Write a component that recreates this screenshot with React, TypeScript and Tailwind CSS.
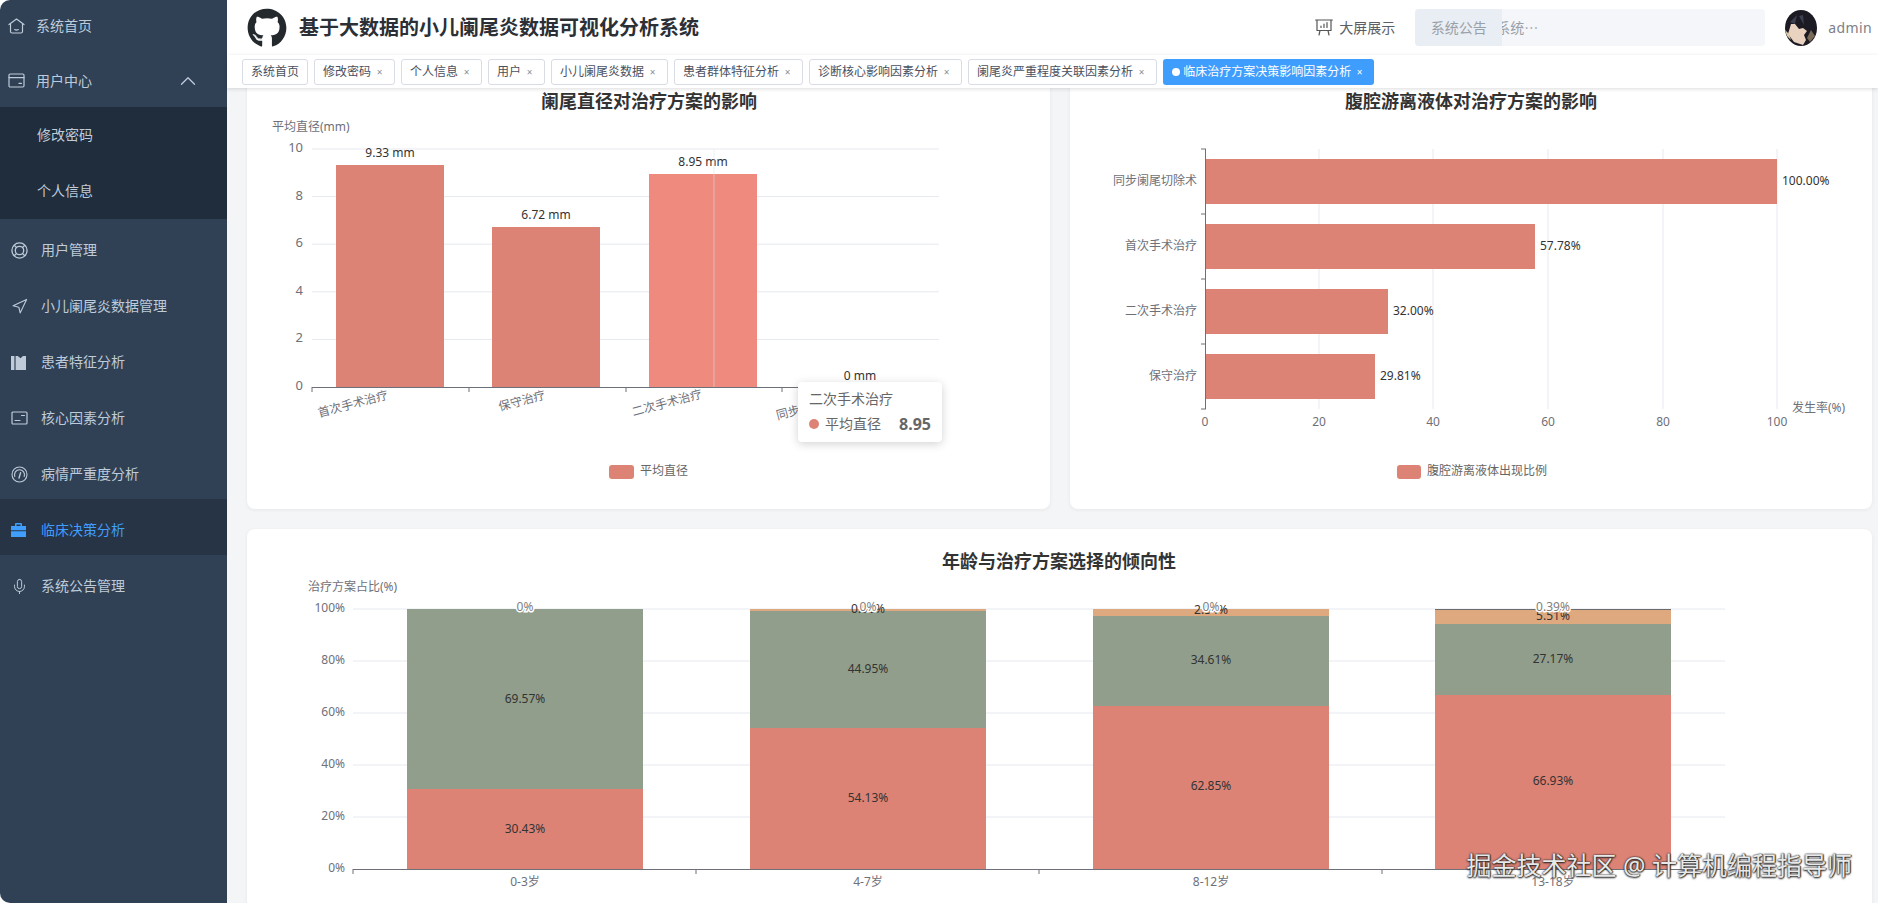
import { ChevronDown, ChevronUp, Mic, Navigation } from "lucide-react";
import { FaGithub } from "react-icons/fa";
import type { ReactNode } from "react";

const RED = "#dc8376";
const GREEN = "#919e8b";
const ORANGE = "#dfa97f";
const AXIS = "#6e7079";
const GRID = "#e6e9f0";
const LABEL = "#333";

const HomeIcon = () => (
  <svg width="17" height="16" viewBox="0 0 17 16" fill="none" stroke="currentColor" strokeWidth="1.2" strokeLinecap="round" strokeLinejoin="round">
    <path d="M1 6.6 8.5 1 16 6.6" />
    <path d="M2.5 6v7.5A1.5 1.5 0 0 0 4 15h9a1.5 1.5 0 0 0 1.5-1.5V6" />
    <path d="M6.7 11.6q1.8 1 3.6 0" />
  </svg>
);
const WalletIcon = () => (
  <svg width="17" height="15" viewBox="0 0 17 15" fill="none" stroke="currentColor" strokeWidth="1.2" strokeLinecap="round">
    <rect x="1" y="1" width="15" height="13" rx="1.2" />
    <path d="M1 4.6h15M11 10.4h2.4" />
  </svg>
);
const RingIcon = () => (
  <svg width="17" height="17" viewBox="0 0 17 17" fill="none" stroke="currentColor" strokeWidth="1.3">
    <circle cx="8.5" cy="8.5" r="7.6" />
    <circle cx="8.5" cy="8.5" r="4.2" />
    <path d="m3.2 3.2 2.400 2.400M13.800 3.200l-2.400 2.400M3.200 13.800l2.400-2.400M13.800 13.800l-2.400-2.400" />
  </svg>
);
const MapIcon = () => (
  <svg width="15" height="15" viewBox="0 0 15 15" fill="currentColor">
    <path d="M0 1h3.400v14H0zM4.600 1h2.200l2.700 2.200L12 1h3v14H4.600z" />
  </svg>
);
const CardIcon = () => (
  <svg width="17" height="14" viewBox="0 0 17 14" fill="none" stroke="currentColor" strokeWidth="1.2" strokeLinecap="round">
    <rect x="1" y="1" width="15" height="12" rx="1" />
    <path d="M4 9.500h5M10.500 4.500h3" />
  </svg>
);
const GaugeIcon = () => (
  <svg width="17" height="17" viewBox="0 0 17 17" fill="none" stroke="currentColor" strokeWidth="1.1" strokeLinecap="round">
    <circle cx="8.500" cy="8.500" r="7.500" />
    <path d="M3.800 10.500a5 5 0 1 1 9.400 0" />
    <path d="M8 12 9.600 6.600" strokeWidth="1.4" />
  </svg>
);
const CaseIcon = () => (
  <svg width="15" height="14" viewBox="0 0 15 14" fill="currentColor">
    <path d="M5 0h5a1 1 0 0 1 1 1v2H9.500V1.500h-4V3H4V1a1 1 0 0 1 1-1z" />
    <path d="M0 3h15v4.200H0zM0 8.200h15V14H0z" />
  </svg>
);
const ScreenIcon = () => (
  <svg width="18" height="18" viewBox="0 0 18 18" fill="none" stroke="#555" strokeWidth="1.2" strokeLinecap="round">
    <path d="M.6 1h16.800M2 1v10.500h14V1M5 11.500 4 16M13 11.500l1 4.500" />
    <path d="M6 8.500V7M9 8.500V5M12 8.500V3.500" />
  </svg>
);
const Avatar = () => (
  <svg width="32" height="36" viewBox="0 0 32 36" className="shrink-0">
    <ellipse cx="16" cy="18" rx="16" ry="18" fill="#1c1a22" />
    <path d="M6 14 3 24l6 8 9 3 3-5-2-5 3-4-4-3-4 1-4-5z" fill="#e9d2c0" />
    <path d="M5 12 12 5 10 14zM14 6l5 9-1-10z" fill="#3b4150" />
    <path d="M26 20 30 26 25 32 22 28z" fill="#7a6a58" />
    <path d="M0 20 4 24 6 30 2 26z" fill="#d9c7a8" />
  </svg>
);

type Top = { label: string; icon: ReactNode; active?: boolean };
const MENU: Top[] = [
  { label: "用户管理", icon: <RingIcon /> },
  { label: "小儿阑尾炎数据管理", icon: <Navigation size={17} strokeWidth={1.6} /> },
  { label: "患者特征分析", icon: <MapIcon /> },
  { label: "核心因素分析", icon: <CardIcon /> },
  { label: "病情严重度分析", icon: <GaugeIcon /> },
  { label: "临床决策分析", icon: <CaseIcon />, active: true },
  { label: "系统公告管理", icon: <Mic size={17} strokeWidth={1.4} /> },
];

const TAGS = ["修改密码", "个人信息", "用户", "小儿阑尾炎数据", "患者群体特征分析", "诊断核心影响因素分析", "阑尾炎严重程度关联因素分析"];

function Sidebar() {
  return (
    <aside className="w-[227px] shrink-0 rounded-l-[10px] bg-[#304156] text-sm text-[#bfcbd9]">
      <div className="flex h-[52px] items-center pl-2">
        <span className="flex w-7 shrink-0"><HomeIcon /></span>
        <span>系统首页</span>
      </div>
      <div className="flex h-[55px] items-center pl-2 pr-[26px] pt-0.5">
        <span className="flex w-7 shrink-0"><WalletIcon /></span>
        <span>用户中心</span>
        <ChevronUp size={26} strokeWidth={1.2} className="ml-auto" />
      </div>
      <div className="bg-[#1f2d3d] pl-[37px]">
        <div className="flex h-14 items-center">修改密码</div>
        <div className="flex h-14 items-center">个人信息</div>
      </div>
      {MENU.map((m) => (
        <div
          key={m.label}
          className={`flex h-14 items-center pl-[11px] pt-1.5 ${m.active ? "bg-[#263445] text-[#409eff]" : ""}`}
        >
          <span className="flex w-[30px] shrink-0 justify-start">{m.icon}</span>
          <span>{m.label}</span>
        </div>
      ))}
    </aside>
  );
}

function Header() {
  return (
    <header className="flex h-[55px] shrink-0 items-center bg-white pl-5">
      <FaGithub size={40} color="#24292e" />
      <h1 className="ml-3 text-xl font-bold text-[#2b2f36]">基于大数据的小儿阑尾炎数据可视化分析系统</h1>
      <div className="ml-auto flex items-center text-sm text-[#5a5e66]">
        <ScreenIcon />
        <span className="ml-1.5">大屏展示</span>
        <div className="ml-5 flex h-[37px] w-[350px] overflow-hidden rounded bg-[#f4f6f9]">
          <div className="flex w-[87px] shrink-0 items-center justify-center bg-[#e9eef4] text-[#9aa0a8]">系统公告</div>
          <div className="flex w-[36px] items-center justify-end overflow-hidden whitespace-nowrap text-[#9aa0a8]">系统⋯</div>
        </div>
        <div className="ml-5"><Avatar /></div>
        <span className="ml-[11px] tracking-[0.4px] text-[#7d8087]">admin</span>
        <ChevronDown size={12} className="-mr-[10px] ml-1 text-[#7d8087]" />
      </div>
    </header>
  );
}

function TagBar() {
  return (
    <div className="relative z-10 flex h-[33px] shrink-0 gap-1.5 bg-white pl-[15px] pt-1 text-xs text-[#495060] shadow-[0_1px_4px_rgba(0,0,0,0.14)]">
      <span className="flex h-[26px] items-center rounded-[3px] border border-[#d8dce5] px-2">系统首页</span>
      {TAGS.map((t) => (
        <span key={t} className="flex h-[26px] items-center rounded-[3px] border border-[#d8dce5] pl-2 pr-1.5">
          {t}
          <span className="w-[17px] text-center text-[10px] leading-none text-[#8a8f99]">×</span>
        </span>
      ))}
      <span className="flex h-[26px] items-center rounded-[3px] bg-[#3f9dfd] pl-[9px] pr-1.5 text-white">
        <span className="mr-[3px] h-2 w-2 rounded-full bg-white" />
        临床治疗方案决策影响因素分析
        <span className="w-[17px] text-center text-[10px] leading-none">×</span>
      </span>
    </div>
  );
}

function DiameterChart() {
  const base = 387;
  const ticks = [10, 8, 6, 4, 2, 0];
  const bars = [
    { x: 336, top: 165, label: "9.33 mm", ly: 153, cat: "首次手术治疗", cx: 353, cy: 404, fill: RED },
    { x: 492, top: 227, label: "6.72 mm", ly: 215, cat: "保守治疗", cx: 522, cy: 401, fill: RED },
    { x: 649, top: 174, label: "8.95 mm", ly: 162, cat: "二次手术治疗", cx: 667, cy: 403, fill: "#ee8b7e" },
  ];
  return (
    <svg width="803" height="449" viewBox="247 60 803 449" className="block">
      <text x="649" y="108" textAnchor="middle" fontSize="18" fontWeight="700" fill="#333">阑尾直径对治疗方案的影响</text>
      <text x="272" y="131" fontSize="12" fill={AXIS}>平均直径(mm)</text>
      {ticks.map((t, i) => {
        const y = 149 + i * 47.6;
        return (
          <g key={t}>
            {t !== 0 && <line x1="312" x2="939" y1={y} y2={y} stroke={GRID} />}
            <text x="303" y={y + 3} textAnchor="end" fontSize="13" fill={AXIS}>{t}</text>
          </g>
        );
      })}
      {bars.map((b) => (
        <g key={b.label}>
          <rect x={b.x} y={b.top} width="108" height={base - b.top} fill={b.fill} />
          <text x={b.x + 54} y={b.ly + 4} textAnchor="middle" fontSize="12" fill={LABEL}>{b.label}</text>
          <text x={b.cx} y={b.cy + 4} textAnchor="middle" fontSize="12" fill={AXIS} transform={`rotate(-15 ${b.cx} ${b.cy})`}>{b.cat}</text>
        </g>
      ))}
      <text x="817" y="409" textAnchor="middle" fontSize="12" fill={AXIS} transform="rotate(-15 817 405)">同步阑尾切除术</text>
      <text x="860" y="380" textAnchor="middle" fontSize="12" fill={LABEL}>0 mm</text>
      <line x1="714" x2="714" y1="149" y2="387" stroke="#dfe3ea" strokeOpacity="0.55" />
      <line x1="312" x2="939" y1="387.500" y2="387.500" stroke={AXIS} />
      {[312, 469, 626, 782, 939].map((x) => (
        <line key={x} x1={x} x2={x} y1="387" y2="392" stroke={AXIS} />
      ))}
      <rect x="609" y="465" width="25" height="14" rx="3" fill={RED} />
      <text x="640" y="475" fontSize="12" fill="#666">平均直径</text>
    </svg>
  );
}

function EffusionChart() {
  const bars = [
    { cat: "同步阑尾切除术", top: 159, w: 571, label: "100.00%" },
    { cat: "首次手术治疗", top: 224, w: 329, label: "57.78%" },
    { cat: "二次手术治疗", top: 289, w: 182, label: "32.00%" },
    { cat: "保守治疗", top: 354, w: 169, label: "29.81%" },
  ];
  const xs = [1205, 1319, 1433, 1548, 1663, 1777];
  return (
    <svg width="802" height="449" viewBox="1070 60 802 449" className="block">
      <text x="1471" y="108" textAnchor="middle" fontSize="18" fontWeight="700" fill="#333">腹腔游离液体对治疗方案的影响</text>
      {xs.map((x, i) => (
        <g key={x}>
          {i > 0 && <line x1={x} x2={x} y1="149" y2="409" stroke={GRID} />}
          <text x={x} y="426" textAnchor="middle" fontSize="12" fill={AXIS}>{i * 20}</text>
        </g>
      ))}
      {bars.map((b) => (
        <g key={b.cat}>
          <rect x="1206" y={b.top} width={b.w} height="45" fill={RED} />
          <text x="1197" y={b.top + 26} textAnchor="end" fontSize="12" fill={AXIS}>{b.cat}</text>
          <text x={1206 + b.w + 5} y={b.top + 26} fontSize="12" fill={LABEL}>{b.label}</text>
        </g>
      ))}
      <line x1="1205.500" x2="1205.500" y1="149" y2="409" stroke={AXIS} />
      {[149, 214, 279, 344, 409].map((y) => (
        <line key={y} x1="1201" x2="1206" y1={y} y2={y} stroke={AXIS} />
      ))}
      <text x="1792" y="412" fontSize="12" fill={AXIS}>发生率(%)</text>
      <rect x="1397" y="465" width="24" height="14" rx="3" fill={RED} />
      <text x="1427" y="475" fontSize="12" fill="#666">腹腔游离液体出现比例</text>
    </svg>
  );
}

function AgeChart() {
  const columns = [
    { cat: "0-3岁", x: 407, red: 789, green: 609, orange: 609, dark: false, ry: 829, gy: 699, oy: 0, o: "", top: "0%" },
    { cat: "4-7岁", x: 750, red: 728, green: 611, orange: 609, dark: false, ry: 798, gy: 669, oy: 609, o: "0.92%", top: "0%" },
    { cat: "8-12岁", x: 1093, red: 706, green: 616, orange: 609, dark: false, ry: 786, gy: 660, oy: 610, o: "2.54%", top: "0%" },
    { cat: "13-18岁", x: 1435, red: 695, green: 624, orange: 610, dark: true, ry: 781, gy: 659, oy: 616, o: "5.51%", top: "0.39%" },
  ];
  const values = [
    ["30.43%", "69.57%"],
    ["54.13%", "44.95%"],
    ["62.85%", "34.61%"],
    ["66.93%", "27.17%"],
  ];
  return (
    <svg width="1625" height="374" viewBox="247 529 1625 374" className="block">
      <text x="1059" y="568" textAnchor="middle" fontSize="18" fontWeight="700" fill="#333">年龄与治疗方案选择的倾向性</text>
      <text x="308" y="591" fontSize="12" fill={AXIS}>治疗方案占比(%)</text>
      {[100, 80, 60, 40, 20, 0].map((t, i) => {
        const y = 609 + i * 52;
        return (
          <g key={t}>
            {t !== 0 && <line x1="353" x2="1725" y1={y} y2={y} stroke={GRID} />}
            <text x="345" y={y + 3} textAnchor="end" fontSize="12" fill={AXIS}>{t}%</text>
          </g>
        );
      })}
      {columns.map((c, i) => (
        <g key={c.cat}>
          <rect x={c.x} y={c.orange} width="236" height={c.green - c.orange} fill={ORANGE} />
          <rect x={c.x} y={c.green} width="236" height={c.red - c.green} fill={GREEN} />
          <rect x={c.x} y={c.red} width="236" height={869 - c.red} fill={RED} />
          {c.dark && <rect x={c.x} y="609" width="236" height="1" fill="#6b6b6b" />}
          <text x={c.x + 118} y={c.ry + 4} textAnchor="middle" fontSize="12" fill={LABEL}>{values[i][0]}</text>
          <text x={c.x + 118} y={c.gy + 4} textAnchor="middle" fontSize="12" fill={LABEL}>{values[i][1]}</text>
          {c.o && <text x={c.x + 118} y={c.oy + 4} textAnchor="middle" fontSize="12" fill={LABEL}>{c.o}</text>}
          <text x={c.x + 118} y="611" textAnchor="middle" fontSize="12" fill="#808080" stroke="#fff" strokeWidth="3" paintOrder="stroke">{c.top}</text>
          <text x={c.x + 118} y="886" textAnchor="middle" fontSize="12" fill={AXIS}>{c.cat}</text>
        </g>
      ))}
      <line x1="353" x2="1725" y1="869.500" y2="869.500" stroke={AXIS} />
      {[353, 696, 1039, 1382, 1725].map((x) => (
        <line key={x} x1={x} x2={x} y1="869" y2="874" stroke={AXIS} />
      ))}
    </svg>
  );
}

export default function App() {
  return (
    <div className="relative flex h-screen w-full overflow-hidden bg-white font-['Noto_Sans','Noto_Sans_CJK_SC',sans-serif]">
      <Sidebar />
      <div className="flex min-w-0 flex-1 flex-col">
        <Header />
        <TagBar />
        <main className="flex-1 overflow-hidden bg-[#f4f5f7] pl-5 pr-1.5">
          <div className="-mt-7 grid grid-cols-2 gap-5">
            <section className="relative h-[449px] rounded-lg bg-white shadow-[0_1px_4px_rgba(0,0,0,0.06)]">
              <DiameterChart />
              <div className="absolute left-[551px] top-[322px] flex h-[60px] w-[144px] flex-col justify-center gap-[3px] rounded bg-white px-[11px] text-sm text-[#666] shadow-[0_2px_10px_rgba(0,0,0,0.18)]">
                <div className="leading-5">二次手术治疗</div>
                <div className="flex items-center leading-5">
                  <span className="h-2.5 w-2.5 rounded-full bg-[#dc8376]" />
                  <span className="ml-1.5">平均直径</span>
                  <span className="ml-auto text-base font-bold">8.95</span>
                </div>
              </div>
            </section>
            <section className="h-[449px] rounded-lg bg-white shadow-[0_1px_4px_rgba(0,0,0,0.06)]">
              <EffusionChart />
            </section>
            <section className="col-span-2 h-[420px] rounded-lg bg-white shadow-[0_1px_4px_rgba(0,0,0,0.06)]">
              <AgeChart />
            </section>
          </div>
        </main>
      </div>
      <div className="absolute bottom-[20px] right-[26px] text-[25px] leading-9 text-[#e8e8e8] [text-shadow:0_0_2px_#222,0_1px_2px_#222,1px_0_1px_#444]">
        掘金技术社区 @ 计算机编程指导师
      </div>
    </div>
  );
}
